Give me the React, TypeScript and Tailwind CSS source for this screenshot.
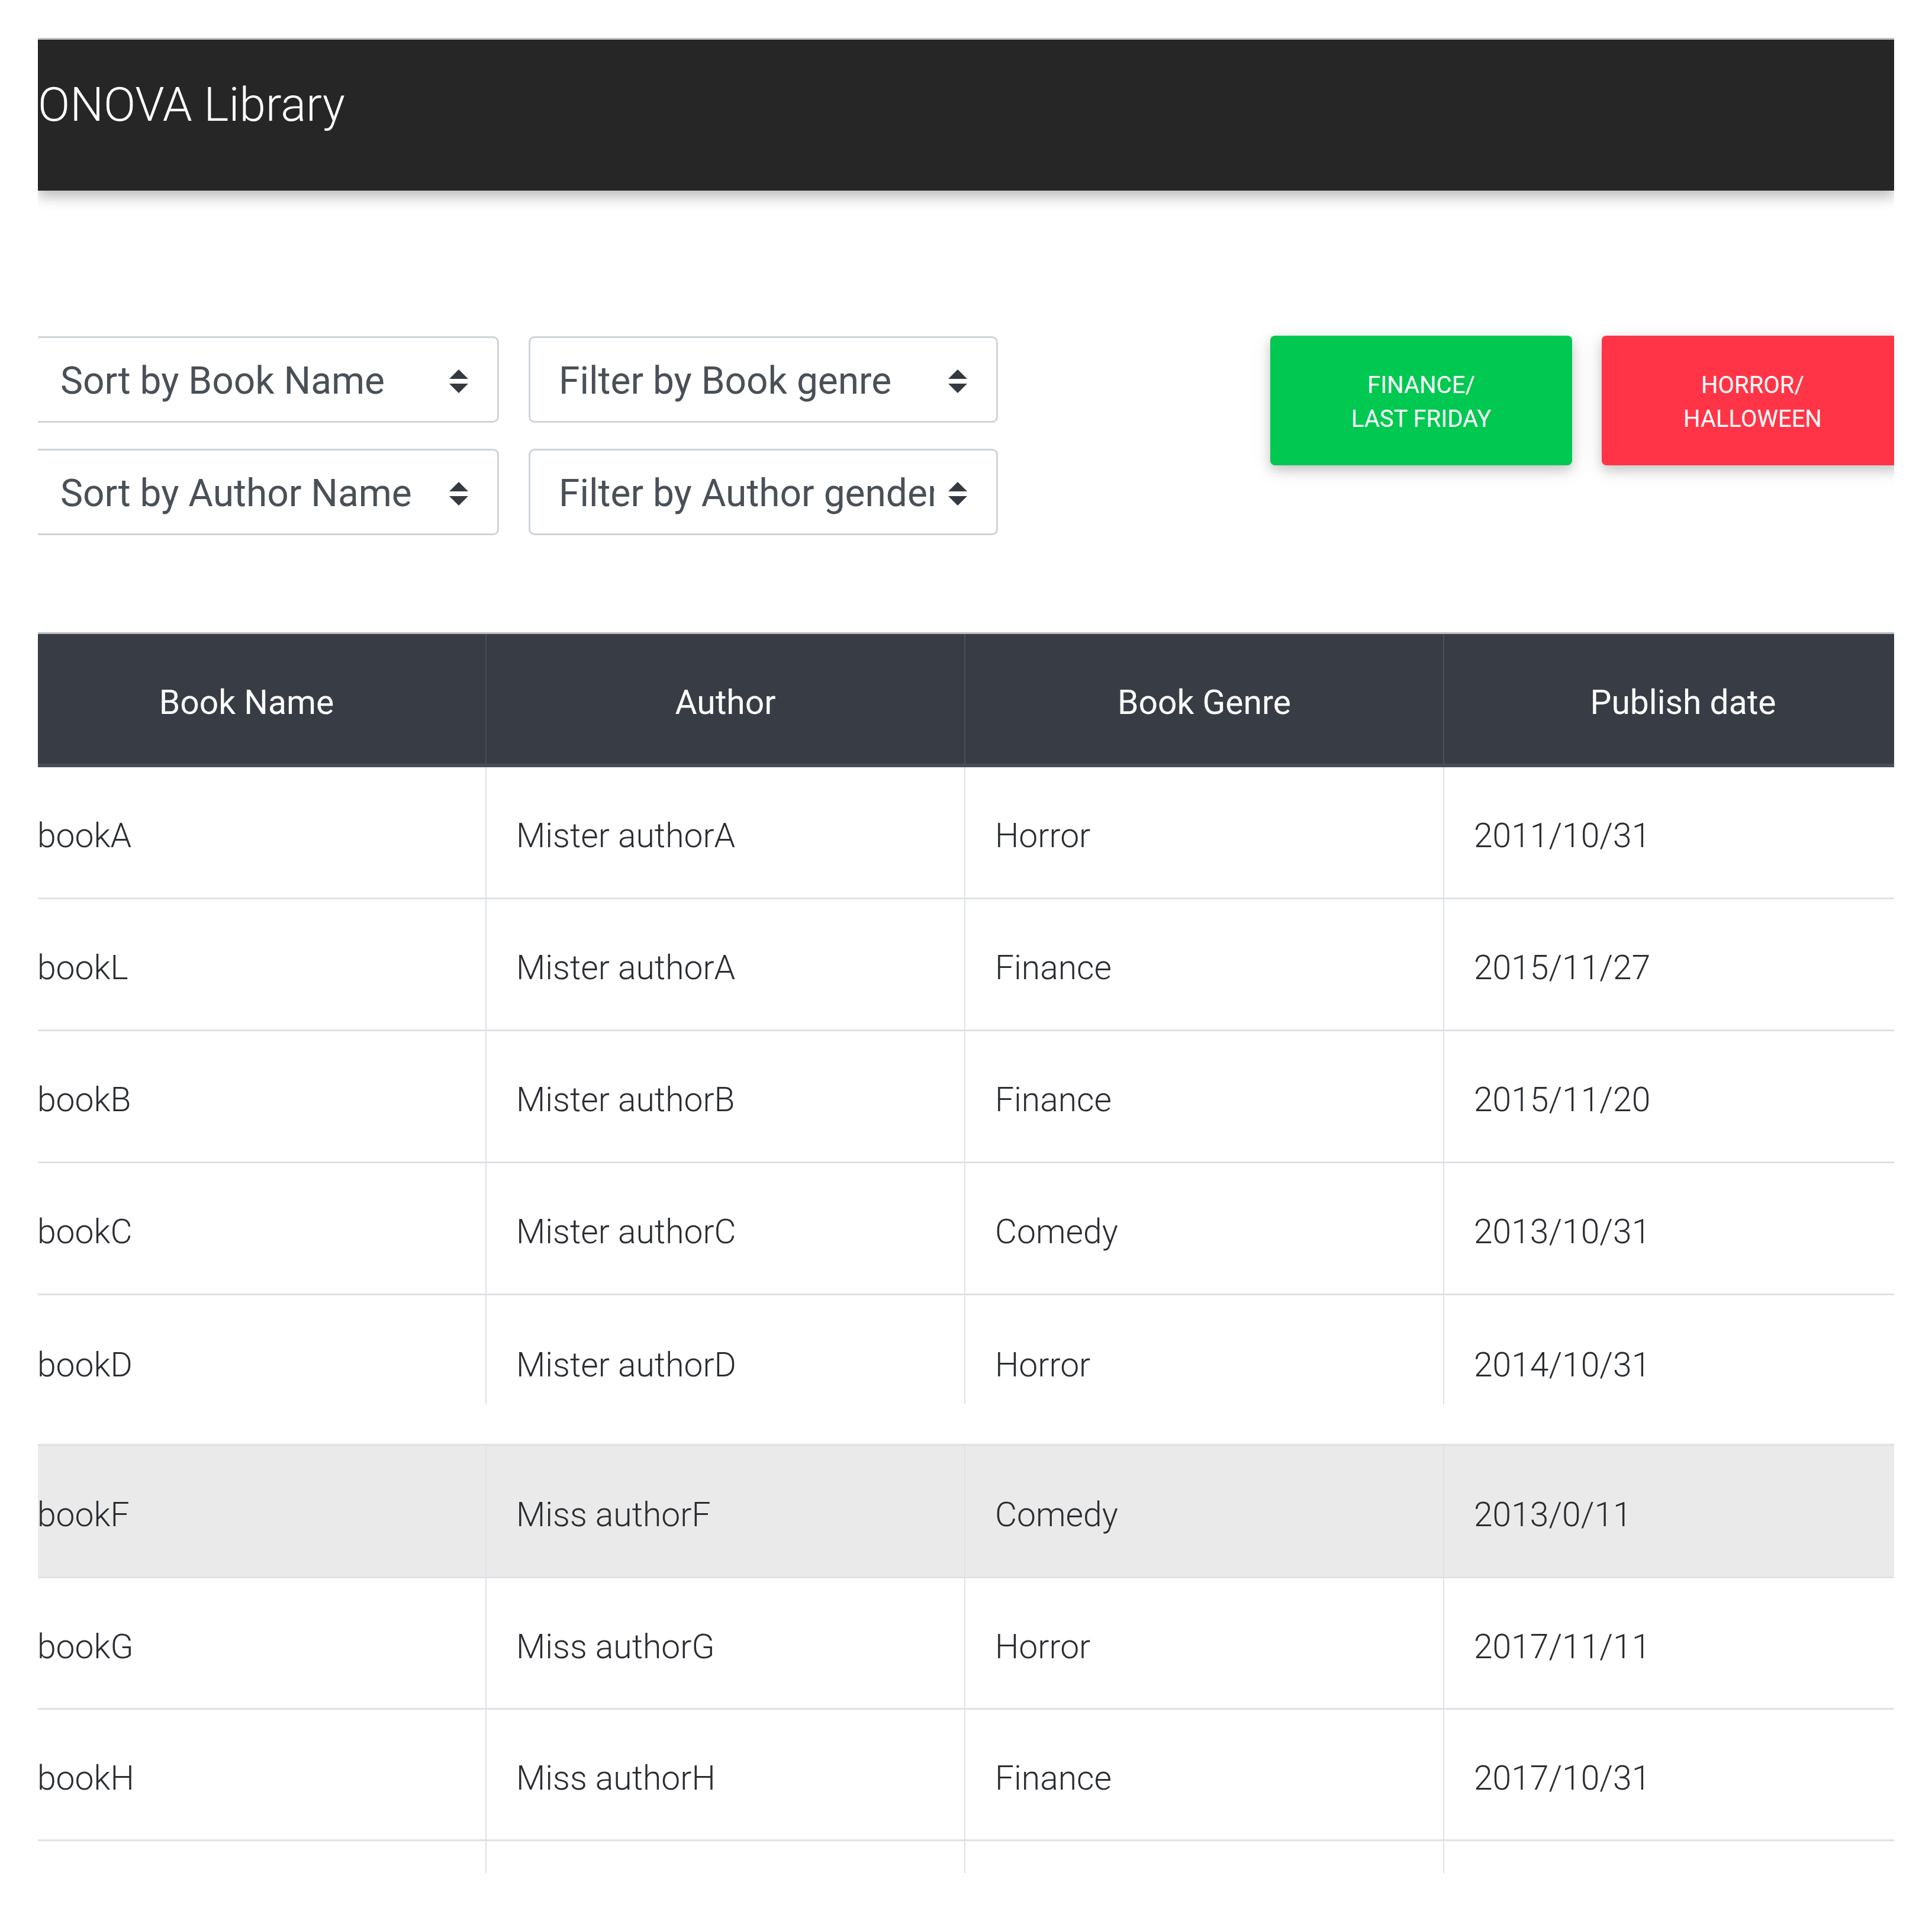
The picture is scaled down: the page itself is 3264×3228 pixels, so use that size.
import React from "react";

type Row = [string, string, string, string];

const top: Row[] = [
  ["bookA", "Mister authorA", "Horror", "2011/10/31"],
  ["bookL", "Mister authorA", "Finance", "2015/11/27"],
  ["bookB", "Mister authorB", "Finance", "2015/11/20"],
  ["bookC", "Mister authorC", "Comedy", "2013/10/31"],
];
const rowD: Row = ["bookD", "Mister authorD", "Horror", "2014/10/31"];
const bottom: Row[] = [
  ["bookG", "Miss authorG", "Horror", "2017/11/11"],
  ["bookH", "Miss authorH", "Finance", "2017/10/31"],
];

function Arrows() {
  return (
    <svg viewBox="0 0 4 5" className="w-[32px] h-[40px] shrink-0">
      <path fill="#343a40" d="M2 0L0 2h4zm0 5L0 3h4z" />
    </svg>
  );
}

function Select({ label }: { label: string }) {
  return (
    <div className="h-[146px] border-[3px] border-[#ced4da] rounded-[10px] bg-white flex items-center pt-[6px] pl-[48px] pr-[49px] text-[64px] text-[#495057]">
      <div className="flex-1 min-w-0 overflow-hidden whitespace-nowrap leading-[76px]">{label}</div>
      <div className="ml-[24px] flex">
        <Arrows />
      </div>
    </div>
  );
}

function Cells({ r }: { r: Row }) {
  return (
    <>
      {r.map((c, i) => (
        <div
          key={i}
          className="flex items-center pt-[12px] pl-[50px] border-l-[2px] border-[#dee2e6] text-[57px] font-light text-[#2a2d31] whitespace-nowrap"
        >
          {c}
        </div>
      ))}
    </>
  );
}

export default function App() {
  return (
    <div className="w-[3264px] h-[3228px] bg-white font-['Roboto',sans-serif]">
      <div className="relative ml-[64px] pt-[64px] w-[3200px]">
        <div className="w-[3136px] h-[3100px] overflow-hidden bg-white">
          {/* Navbar */}
          <div className="relative z-10 h-[258px] bg-[#262626] border-t-[3px] border-[#c4c4c4] shadow-[0_10px_22px_rgba(0,0,0,0.28)]">
            <div className="pt-[64px] text-[80px] leading-[93px] font-light text-white whitespace-nowrap">
              ONOVA Library
            </div>
          </div>

          {/* Controls */}
          <div className="mt-[245px] flex items-start">
            <div className="-ml-[13px] mt-[1px] grid grid-cols-[792px_793px] gap-x-[50px] gap-y-[44px]">
              <Select label="Sort by Book Name" />
              <Select label="Filter by Book genre" />
              <Select label="Sort by Author Name" />
              <Select label="Filter by Author gender" />
            </div>
            <div className="ml-[460px] flex gap-[50px] shrink-0">
              <div className="w-[510px] h-[219px] shrink-0 rounded-[8px] bg-[#00c851] text-white text-[40px] leading-[57px] uppercase flex items-center justify-center text-center pt-[4px] shadow-[0_8px_18px_rgba(0,0,0,0.16),0_8px_36px_rgba(0,0,0,0.1)]">
                <div>
                  FINANCE/
                  <br />
                  LAST FRIDAY
                </div>
              </div>
              <div className="w-[510px] h-[219px] shrink-0 rounded-[8px] bg-[#ff3547] text-white text-[40px] leading-[57px] uppercase flex items-center justify-center text-center pt-[4px] shadow-[0_8px_18px_rgba(0,0,0,0.16),0_8px_36px_rgba(0,0,0,0.1)]">
                <div>
                  HORROR/
                  <br />
                  HALLOWEEN
                </div>
              </div>
            </div>
          </div>

          {/* Table part 1 */}
          <div className="mt-[164px] -ml-[53px] w-[3236px]">
            <div className="grid grid-cols-4 h-[228px] bg-[#383d45] border-t-[3px] border-t-[#b9bdc1] border-b-[6px] border-b-[#474d55] text-white text-[57px]">
              {["Book Name", "Author", "Book Genre", "Publish date"].map((h, i) => (
                <div key={i} className="flex items-center justify-center pt-[12px] border-l-[2px] border-[#4b5058]">
                  {h}
                </div>
              ))}
            </div>
            {top.map((r, i) => (
              <div key={i} className="grid grid-cols-4 h-[223px] border-b-[3px] border-[#dee2e6]">
                <Cells r={r} />
              </div>
            ))}
            <div className="h-[184px] overflow-hidden">
              <div className="grid grid-cols-4 h-[223px]">
                <Cells r={rowD} />
              </div>
            </div>
          </div>

          {/* Table part 2 */}
          <div className="mt-[67px] -ml-[53px] w-[3236px]">
            <div className="grid grid-cols-4 h-[227px] bg-[#eaeaea] border-t-[3px] border-b-[3px] border-[#dee2e6]">
              <Cells r={["bookF", "Miss authorF", "Comedy", "2013/0/11"]} />
            </div>
            {bottom.map((r, i) => (
              <div key={i} className="grid grid-cols-4 h-[222px] border-b-[3px] border-[#dee2e6]">
                <Cells r={r} />
              </div>
            ))}
            <div className="grid grid-cols-4 h-[223px]">
              <Cells r={["", "", "", ""]} />
            </div>
          </div>
        </div>
      </div>
    </div>
  );
}
